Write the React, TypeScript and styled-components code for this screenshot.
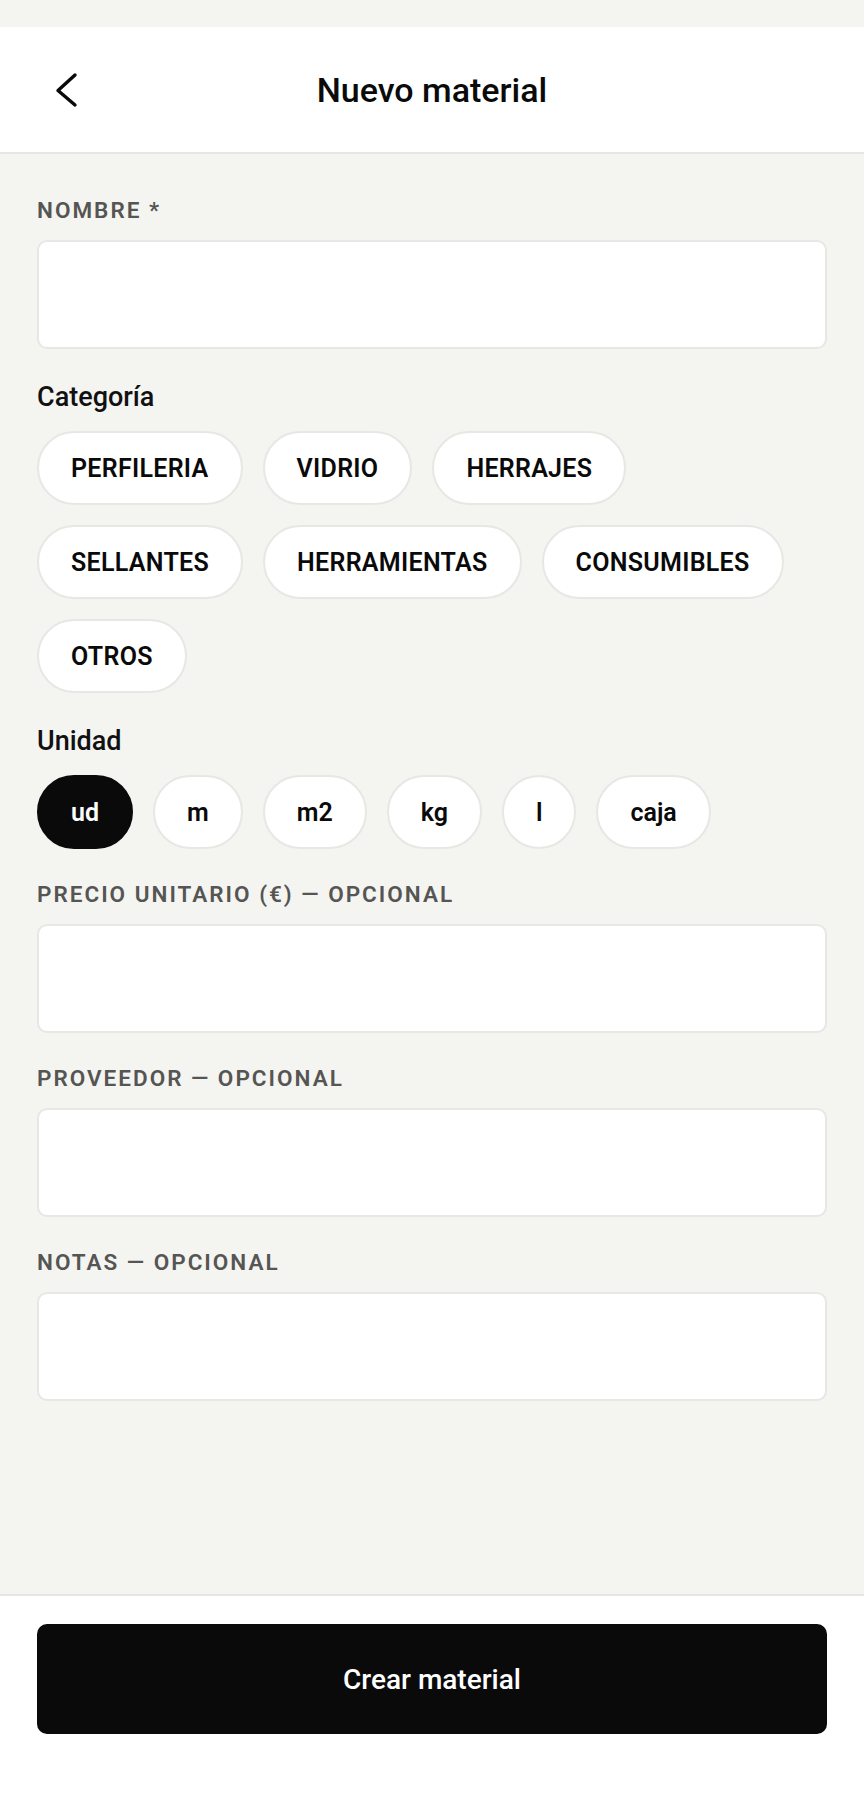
import React, { useState } from "react";
import styled, { createGlobalStyle } from "styled-components";

const GlobalStyle = createGlobalStyle`
  html, body {
    margin: 0;
    padding: 0;
    background: #f4f4f1;
    font-family: Roboto, "Noto Sans", "Liberation Sans", sans-serif;
    color: #111111;
  }
  * { box-sizing: border-box; }
`;

const Screen = styled.div`
  min-height: 100vh;
  display: flex;
  flex-direction: column;
  padding-top: 27px;
  background: #f4f4f1;
`;

const Header = styled.header`
  height: 127px;
  background: #ffffff;
  border-bottom: 2px solid #e6e6e3;
  display: grid;
  grid-template-columns: 1fr auto 1fr;
  align-items: center;
  padding: 0 55px;
`;

const BackButton = styled.button`
  justify-self: start;
  display: flex;
  align-items: center;
  justify-content: center;
  background: none;
  border: none;
  padding: 0;
  cursor: pointer;
  color: #0a0a0a;
`;

const Title = styled.h1`
  margin: 0;
  font-size: 34px;
  font-weight: 500;
  line-height: 40px;
  color: #0a0a0a;
`;

const Main = styled.main`
  flex: 1;
  display: flex;
  flex-direction: column;
  gap: 32px;
  padding: 43px 37px 0 37px;
`;

const Field = styled.div`
  display: flex;
  flex-direction: column;
`;

const FieldLabel = styled.label`
  font-size: 22.5px;
  line-height: 27px;
  font-weight: 600;
  letter-spacing: 2px;
  text-transform: uppercase;
  color: #555553;
  margin-bottom: 16px;
`;

const SectionLabel = styled.div`
  font-size: 27px;
  line-height: 32px;
  font-weight: 500;
  color: #111111;
  margin-bottom: 18px;
`;

const TextInput = styled.input`
  width: 100%;
  height: 109px;
  background: #ffffff;
  border: 2px solid #e7e7e4;
  border-radius: 10px;
  padding: 0 28px;
  font-family: inherit;
  font-size: 27px;
  color: #111111;
  outline: none;
`;

const ChipList = styled.div`
  display: flex;
  flex-wrap: wrap;
  column-gap: 20px;
  row-gap: 20px;
`;

const Chip = styled.button<{ $active?: boolean }>`
  height: 74px;
  padding: 0 32px;
  border-radius: 999px;
  border: 2px solid ${(p) => (p.$active ? "#0a0a0a" : "#e7e7e4")};
  background: ${(p) => (p.$active ? "#0a0a0a" : "#ffffff")};
  color: ${(p) => (p.$active ? "#ffffff" : "#0a0a0a")};
  font-family: inherit;
  font-size: 25px;
  font-weight: 600;
  line-height: 1;
  display: inline-flex;
  align-items: center;
  justify-content: center;
  cursor: pointer;
`;

const CategoryChip = styled(Chip)`
  letter-spacing: 0.3px;
`;

const Footer = styled.footer`
  background: #ffffff;
  border-top: 2px solid #e6e6e3;
  padding: 28px 37px 84px 37px;
`;

const SubmitButton = styled.button`
  width: 100%;
  height: 110px;
  border: none;
  border-radius: 10px;
  background: #0a0a0a;
  color: #ffffff;
  font-family: inherit;
  font-size: 28px;
  font-weight: 500;
  cursor: pointer;
`;

const categories = [
  "PERFILERIA",
  "VIDRIO",
  "HERRAJES",
  "SELLANTES",
  "HERRAMIENTAS",
  "CONSUMIBLES",
  "OTROS",
];

const units = ["ud", "m", "m2", "kg", "l", "caja"];

export default function App() {
  const [category, setCategory] = useState<string | null>(null);
  const [unit, setUnit] = useState("ud");

  return (
    <>
      <GlobalStyle />
      <Screen>
        <Header>
          <BackButton aria-label="Volver">
            <svg width="24" height="36" viewBox="0 0 24 36" fill="none">
              <polyline
                points="20,3 3,18.5 20,33"
                stroke="currentColor"
                strokeWidth="3.4"
                strokeLinecap="round"
                strokeLinejoin="round"
              />
            </svg>
          </BackButton>
          <Title>Nuevo material</Title>
          <div />
        </Header>

        <Main>
          <Field>
            <FieldLabel>Nombre *</FieldLabel>
            <TextInput />
          </Field>

          <Field>
            <SectionLabel>Categoría</SectionLabel>
            <ChipList>
              {categories.map((c) => (
                <CategoryChip key={c} $active={category === c} onClick={() => setCategory(c)}>
                  {c}
                </CategoryChip>
              ))}
            </ChipList>
          </Field>

          <Field>
            <SectionLabel>Unidad</SectionLabel>
            <ChipList>
              {units.map((u) => (
                <Chip key={u} $active={unit === u} onClick={() => setUnit(u)}>
                  {u}
                </Chip>
              ))}
            </ChipList>
          </Field>

          <Field>
            <FieldLabel>Precio unitario (€) — opcional</FieldLabel>
            <TextInput inputMode="decimal" />
          </Field>

          <Field>
            <FieldLabel>Proveedor — opcional</FieldLabel>
            <TextInput />
          </Field>

          <Field>
            <FieldLabel>Notas — opcional</FieldLabel>
            <TextInput />
          </Field>
        </Main>

        <Footer>
          <SubmitButton>Crear material</SubmitButton>
        </Footer>
      </Screen>
    </>
  );
}
